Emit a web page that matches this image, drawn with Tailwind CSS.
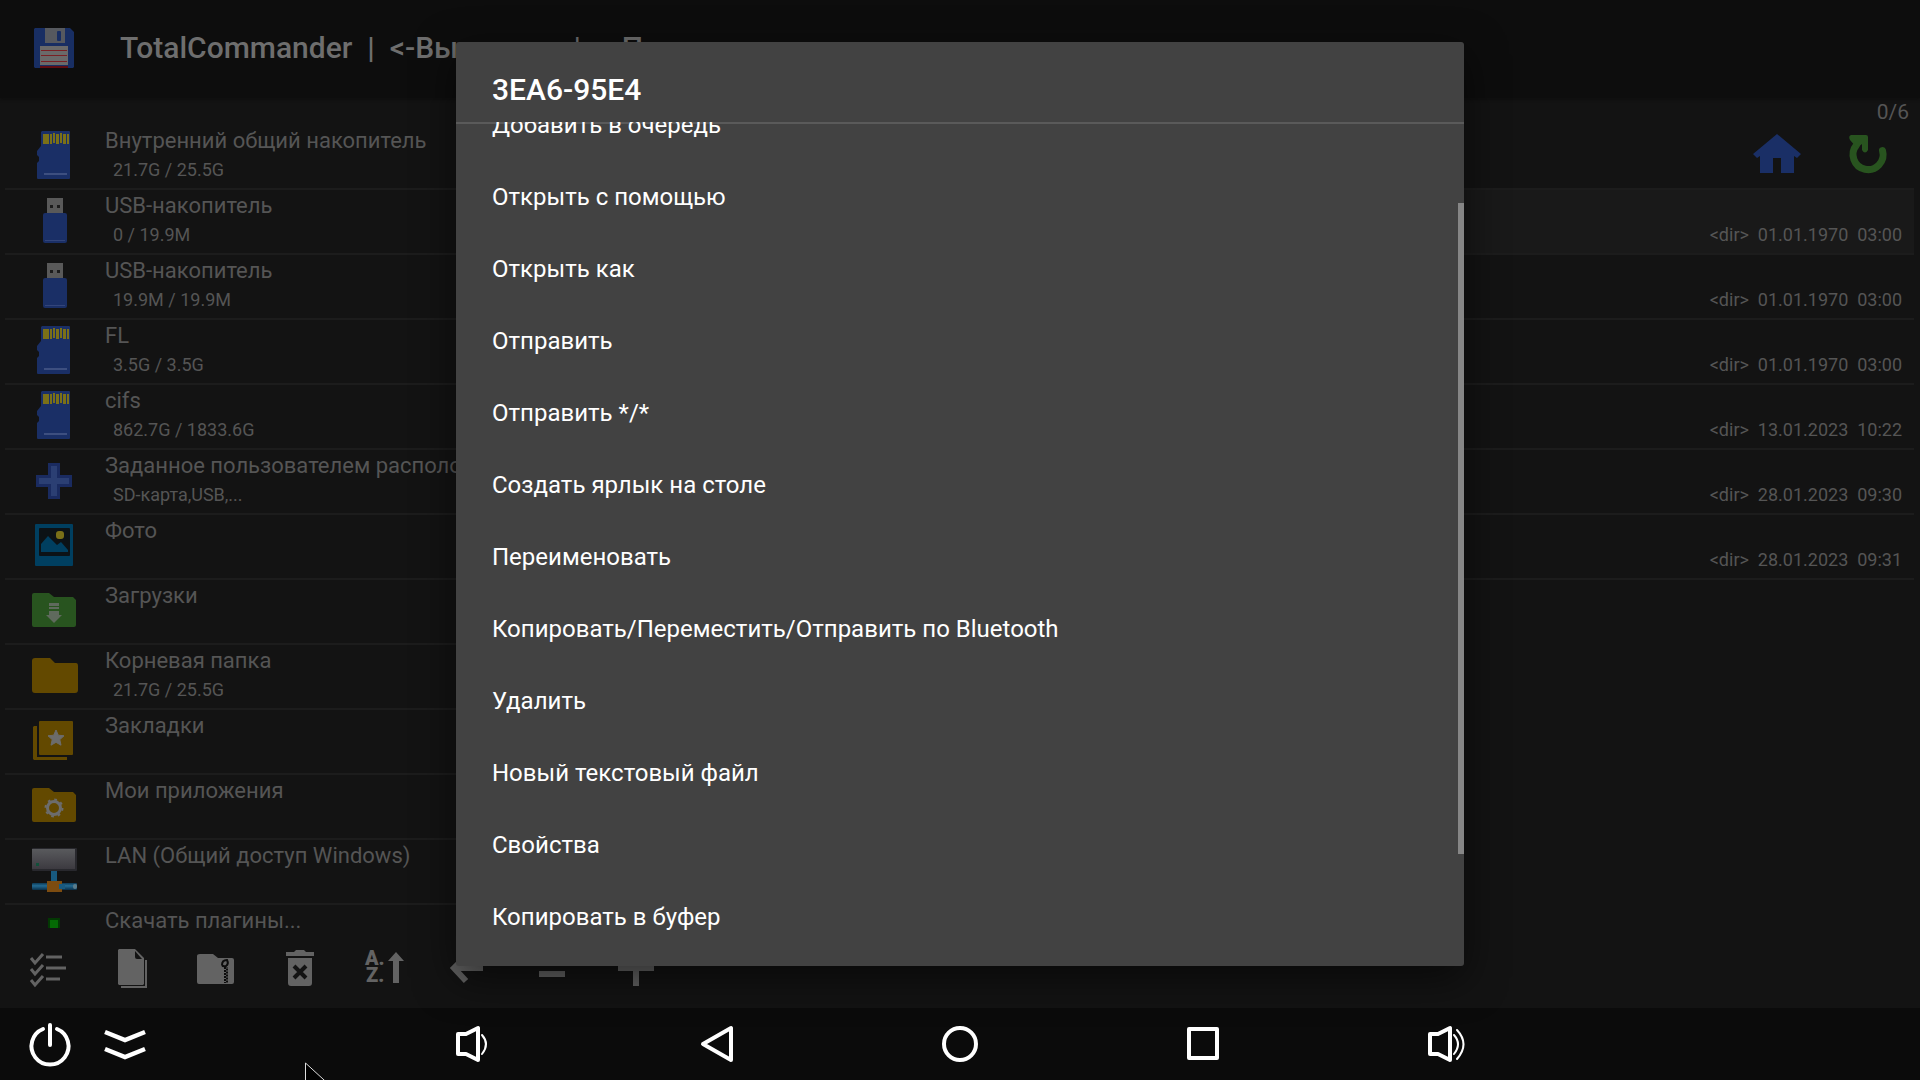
<!DOCTYPE html>
<html lang="ru">
<head>
<meta charset="utf-8">
<title>TotalCommander</title>
<script src="https://cdn.jsdelivr.net/npm/@tailwindcss/browser@4"></script>
</head>
<body class="bg-[#131313] font-[Roboto,sans-serif] text-[#555555]">
<svg class="hidden" aria-hidden="true">
  <symbol id="sd" viewBox="0 0 48 48">
    <path fill="#1a2f66" d="M12 0H39a1 1 0 0 1 1 1V47a1 1 0 0 1-1 1H8a1 1 0 0 1-1-1V32l2-2v-4l-2-2V20l4-5V1z"/>
    <path fill="#7a7018" d="M13 3h6v10h-6zM20 3h2v10h-2zM23 2h2v10h-2zM26 3h3v10h-3zM30 2h2v10h-2zM33 3h3v10h-3zM37 3h2v10h-2z"/>
    <path fill="#3d4f80" d="M14 42h23v2H14z"/>
  </symbol>
  <symbol id="usb" viewBox="0 0 48 48">
    <path fill="#595959" d="M17 2h16v16H17z"/>
    <path fill="#1c1c1c" d="M20 9h3v3h-3zM27 9h3v3h-3z"/>
    <rect x="13" y="17" width="24" height="30" rx="2" fill="#1a2f66"/>
    <path fill="#33457a" d="M15 44h20v1H15z"/>
  </symbol>
</svg>

<div class="relative flex h-screen flex-col overflow-hidden">
  <header class="flex h-[98px] shrink-0 items-start bg-[#0d0d0d] pl-[34px] pt-7 shadow-[0_1px_3px_#0d0d0d]">
    <svg class="size-10" viewBox="0 0 40 40">
      <path fill="#182e63" d="M1 0H36l4 4V39l-1 1H1l-1-1V1z"/>
      <path fill="#56595f" d="M11 0H31V15H11z"/><rect x="23" y="3" width="4" height="10" rx="1" fill="#182e63"/>
      <path fill="#6a6a6a" d="M6 18H34V37H6z"/>
      <path fill="#792024" d="M7 22H33v1H7zM7 27H33v1H7zM7 33H33v1H7z"/><path fill="#5f0c12" d="M6 38H34v2H6z"/>
    </svg>
    <h1 class="ml-[46px] whitespace-pre text-[30px] leading-10 font-medium text-[#6e6e6e]">TotalCommander  |  &lt;-Выделить  |  -&gt;П</h1>
  </header>

  <main class="grid min-h-0 flex-1 grid-cols-2">
    <section class="overflow-hidden pt-[27px] pl-[5px]">
      <ul class="[&>li]:flex [&>li]:h-[65px] [&>li]:border-b-2 [&>li]:border-[#1c1c1c] [&>li>svg]:ml-[25px] [&>li>svg]:mt-[6px] [&>li>svg]:size-12 [&>li>svg]:shrink-0 [&_div]:ml-[27px] [&_b]:block [&_b]:text-[22px] [&_b]:leading-8 [&_b]:font-normal [&_b]:whitespace-nowrap [&_small]:block [&_small]:pl-2 [&_small]:text-[18px] [&_small]:leading-[26px]">
        <li><svg><use href="#sd"/></svg><div><b>Внутренний общий накопитель</b><small>21.7G / 25.5G</small></div></li>
        <li><svg><use href="#usb"/></svg><div><b>USB-накопитель</b><small>0 / 19.9M</small></div></li>
        <li><svg><use href="#usb"/></svg><div><b>USB-накопитель</b><small>19.9M / 19.9M</small></div></li>
        <li><svg><use href="#sd"/></svg><div><b>FL</b><small>3.5G / 3.5G</small></div></li>
        <li><svg><use href="#sd"/></svg><div><b>cifs</b><small>862.7G / 1833.6G</small></div></li>
        <li><svg viewBox="0 0 48 48"><path fill="#2b3f73" stroke="#1a2b60" stroke-width="3" d="M19.500 8.500h9v12h12v9h-12v12h-9v-12h-12v-9h12z"/></svg><div><b>Заданное пользователем расположение</b><small>SD-карта,USB,...</small></div></li>
        <li><svg viewBox="0 0 48 48"><rect x="5" y="3" width="38" height="42" rx="1" fill="#003f60"/><rect x="9" y="7" width="31" height="28" rx="1" fill="#0c1216"/><path fill="#003f60" d="M11 31V23l7-8 9 9 4-3 7 8v2z"/><rect x="26" y="10" width="8" height="8" rx="3" fill="#7a7018"/></svg><div><b>Фото</b></div></li>
        <li><svg viewBox="0 0 48 48"><path fill="#28541f" d="M4 7H19l5 4H43l3 3V39q0 2-2 2H4q-2 0-2-2V9q0-2 2-2z"/><path fill="#5f6a5d" d="M19 17h10v3H19zM19 21h10v2H19zM19 25h10v4h3l-8 8-8-8h3z"/></svg><div><b>Загрузки</b></div></li>
        <li><svg viewBox="0 0 48 48"><path fill="#634900" d="M5 7H20l5 5H46q2 0 2 3V39q0 3-3 3H5q-3 0-3-3V10q0-3 3-3z"/></svg><div><b>Корневая папка</b><small>21.7G / 25.5G</small></div></li>
        <li><svg viewBox="0 0 48 48"><rect x="9" y="5" width="34" height="34" rx="1" fill="#634900"/><path fill="#634900" d="M4 10h3v31h30v3H4l-1-1V11z"/><path fill="#6c6c6c" stroke="#6c6c6c" stroke-width="1" stroke-linejoin="round" d="m26 14 2.300 5.200 5.700.6-4.200 3.800 1.200 5.600-5-2.900-5 2.900 1.200-5.600-4.200-3.800 5.700-.6z"/></svg><div><b>Закладки</b></div></li>
        <li><svg viewBox="0 0 48 48"><path fill="#634900" d="M4 7H19l5 4H43l3 3V39q0 2-2 2H4q-2 0-2-2V9q0-2 2-2z"/><circle cx="24" cy="27" r="6.500" fill="none" stroke="#6c6c6c" stroke-width="3"/><circle cx="24" cy="27" r="8.500" fill="none" stroke="#6c6c6c" stroke-width="2" stroke-dasharray="2.700 3.975"/></svg><div><b>Мои приложения</b></div></li>
        <li><svg viewBox="0 0 48 48"><defs><linearGradient id="g" x2="0" y2="1"><stop stop-color="#595a5d"/><stop offset="1" stop-color="#3c3a40"/></linearGradient><linearGradient id="p" x2="0" y2="1"><stop stop-color="#0d3a55"/><stop offset=".4" stop-color="#236a92"/><stop offset="1" stop-color="#0a2f48"/></linearGradient></defs><rect x="2" y="2" width="45" height="23" rx="1" fill="#28282d"/><rect x="2" y="3" width="43" height="20" fill="url(#g)"/><path fill="#12503a" d="M6 17h3v3H6z"/><path fill="#185a80" d="M21 25h6v10h-6z"/><rect x="2" y="37" width="45" height="7" rx="1" fill="url(#p)"/><path fill="#7d4c10" d="M17 35h15v11H17z"/><path fill="#185a80" d="M29 38h6v5h-6z"/><rect x="43" y="38" width="4" height="5" rx="2" fill="#5a7c8c"/></svg><div><b>LAN (Общий доступ Windows)</b></div></li>
        <li><svg viewBox="0 0 48 48"><path fill="#033803" d="M18 7h12v14H18z"/><path fill="#046a04" d="M20 9h8v12h-8z"/></svg><div><b>Скачать плагины...</b></div></li>
      </ul>
    </section>

    <section class="overflow-hidden pr-[6px]">
      <p class="h-[27px] pr-[5px] text-right text-[21px] leading-7">0/6</p>
      <div class="flex h-[65px] justify-end gap-[42px] border-b-2 border-[#1c1c1c] pr-[23px] pt-[5px]">
        <button aria-label="Домой" class="size-12"><svg viewBox="0 0 48 48"><path fill="#1a2f66" d="M24 4 48 24l-4 4-3-2V43H28V28H20V43H7V26l-3 2-4-4z"/></svg></button>
        <button aria-label="Обновить" class="size-12"><svg viewBox="0 0 48 48"><path fill="none" stroke="#28541f" stroke-width="7" stroke-linecap="round" d="M39.500 20.500A15 15 0 1 1 13.500 15"/><path fill="#28541f" d="M8 5h15q2 0 2 2v13q-3 5-6 0v-6l-5 4-7-8q-2-4 1-5z"/></svg></button>
      </div>
      <ul class="[&>li]:h-[65px] [&>li]:border-b-2 [&>li]:border-[#1c1c1c] [&>li]:pr-3 [&>li]:pt-8 [&>li]:text-right [&>li]:text-[18px] [&>li]:leading-[26px] [&>li]:whitespace-pre">
        <li class="bg-[#191919]">&lt;dir&gt;  01.01.1970  03:00</li>
        <li>&lt;dir&gt;  01.01.1970  03:00</li>
        <li>&lt;dir&gt;  01.01.1970  03:00</li>
        <li>&lt;dir&gt;  13.01.2023  10:22</li>
        <li>&lt;dir&gt;  28.01.2023  09:30</li>
        <li>&lt;dir&gt;  28.01.2023  09:31</li>
      </ul>
    </section>
  </main>

  <div class="flex h-20 shrink-0 pl-[6px] text-[#636363] [&>button]:flex [&>button]:w-[84px] [&>button]:items-center [&>button]:justify-center [&_svg]:size-12">
    <button aria-label="Выделить"><svg viewBox="0 0 48 48" fill="none" stroke="currentColor" stroke-width="3"><path d="m7 14 4 5 8-9M7 25l4 5 8-9M7 36l4 5 8-9M22 13h16M22 24h20M22 35h14"/></svg></button>
    <button aria-label="Копировать"><svg viewBox="0 0 48 48"><path fill="currentColor" d="M11 5h16l9 9v26l-1 1H11l-1-1V6z"/><path fill="#131313" d="m27 7 7 8h-5q-2 0-2-2z"/><path fill="none" stroke="currentColor" stroke-width="2" d="M38 16v27H13"/></svg></button>
    <button aria-label="Упаковать"><svg viewBox="0 0 48 48"><path fill="currentColor" d="M8 10h13l5 4h14q2 0 2 2v22q0 2-2 2H7q-2 0-2-2V12q0-2 3-2z"/><path fill="none" stroke="#0c0c0c" stroke-width="2" d="M30 21q0-5 5-5 2 4-1 6-3 1-4-1"/><path fill="none" stroke="#0c0c0c" stroke-width="2" stroke-dasharray="2 1" d="M33 23v16"/><path fill="none" stroke="#0c0c0c" stroke-width="2" stroke-dasharray="2 1" stroke-dashoffset="1.500" d="M35 23v16"/></svg></button>
    <button aria-label="Удалить файлы"><svg viewBox="0 0 48 48"><path fill="currentColor" d="M10 8h8l2-2h8l2 2h8v4H10zM12 14h24v25q0 3-3 3H15q-3 0-3-3z"/><path stroke="#131313" stroke-width="4" d="m18 22 12 12m0-12L18 34"/></svg></button>
    <button aria-label="Сортировка"><svg viewBox="0 0 48 48" fill="currentColor"><g font-size="20" font-weight="900"><text x="5" y="21">A.</text><text x="6" y="38">Z.</text></g><path d="m36 8 8 9h-5v22h-6V17h-5z"/></svg></button>
    <button aria-label="Назад в истории"><svg viewBox="0 0 48 48" fill="none" stroke="currentColor" stroke-width="6"><path d="M39 24H12M23 11 10 24l12 13"/></svg></button>
    <button aria-label="Сравнить"><svg viewBox="0 0 48 48" fill="currentColor"><path d="M11 16h26v6H11zM11 27h26v6H11z"/></svg></button>
    <button aria-label="Добавить кнопку"><svg viewBox="0 0 48 48" fill="currentColor"><path d="M21 6h6v15h15v6H27v15h-6V27H6v-6h15z"/></svg></button>
  </div>

  <nav aria-label="Система" class="flex h-[72px] shrink-0 bg-[#0b0b0b] text-white [&_button]:flex [&_button]:items-center [&_button]:justify-center [&_svg]:size-12">
    <div class="flex flex-1 px-3 [&>button]:w-[75px]">
      <button aria-label="Питание"><svg viewBox="0 0 48 48" fill="none" stroke="currentColor" stroke-width="4" stroke-linecap="round"><path d="M17 9A18.500 18.500 0 1 0 31 9M24 5v20"/></svg></button>
      <button aria-label="Скрыть панель"><svg viewBox="0 0 48 48" fill="none" stroke="currentColor" stroke-width="4.500"><path d="m4 12 20 8 20-8M4 29l20 8 20-8"/></svg></button>
    </div>
    <div class="flex [&>button]:w-[243px]">
      <button aria-label="Тише"><svg viewBox="0 0 48 48" fill="none" stroke="currentColor" stroke-width="4" stroke-linejoin="round"><path d="M8 14h8l12-6v32l-12-6H8z"/><path stroke-width="2" stroke-linecap="round" d="M32 15q8 9 0 19"/></svg></button>
      <button aria-label="Назад"><svg viewBox="0 0 48 48" fill="none" stroke="currentColor" stroke-width="4" stroke-linejoin="round"><path d="M38 8v32L10 24z"/></svg></button>
      <button aria-label="Домашний экран"><svg viewBox="0 0 48 48" fill="none" stroke="currentColor" stroke-width="4"><circle cx="24" cy="24" r="16"/></svg></button>
      <button aria-label="Недавние"><svg viewBox="0 0 48 48" fill="none" stroke="currentColor" stroke-width="4" stroke-linejoin="round"><path d="M10 9h28v29H10z"/></svg></button>
      <button aria-label="Громче"><svg viewBox="0 0 48 48" fill="none" stroke="currentColor" stroke-width="4" stroke-linejoin="round"><path d="M8 14h8l12-6v32l-12-6H8z"/><path stroke-width="2" stroke-linecap="round" d="M32 15q8 9 0 19M35 10q13 14 0 29"/></svg></button>
    </div>
    <div class="flex-1 px-3"></div>
  </nav>

  <!-- Context menu dialog -->
  <div class="absolute inset-x-0 top-0 bottom-[72px] flex justify-center py-[42px]">
    <div role="dialog" aria-labelledby="dlg" class="relative flex w-[1008px] flex-col overflow-hidden rounded-[3px] bg-[#424242] text-white shadow-[0_12px_40px_rgba(0,0,0,0.55)]">
      <h2 id="dlg" class="h-[82px] shrink-0 border-b-2 border-[#5a5a5a] px-9 pt-7 text-[30px] leading-10 font-medium">3EA6-95E4</h2>
      <div class="-mt-[2px] min-h-0 flex-1 overflow-hidden">
        <ul class="-mt-[33px] [&_button]:block [&_button]:h-[72px] [&_button]:w-full [&_button]:px-9 [&_button]:text-left [&_button]:text-[24px]">
          <li><button>Добавить в очередь</button></li>
          <li><button>Открыть с помощью</button></li>
          <li><button>Открыть как</button></li>
          <li><button>Отправить</button></li>
          <li><button>Отправить */*</button></li>
          <li><button>Создать ярлык на столе</button></li>
          <li><button>Переименовать</button></li>
          <li><button>Копировать/Переместить/Отправить по Bluetooth</button></li>
          <li><button>Удалить</button></li>
          <li><button>Новый текстовый файл</button></li>
          <li><button>Свойства</button></li>
          <li><button>Копировать в буфер</button></li>
        </ul>
      </div>
      <div class="absolute top-[161px] right-0 h-[651px] w-[6px] bg-[#868686]"></div>
    </div>
  </div>

  <!-- Mouse pointer -->
  <svg class="absolute bottom-0 left-[305px] h-[18px] w-6" viewBox="0 0 24 18"><path fill="#000" stroke="#ddd" d="M.500 24V1l24 22"/></svg>
</div>
</body>
</html>
